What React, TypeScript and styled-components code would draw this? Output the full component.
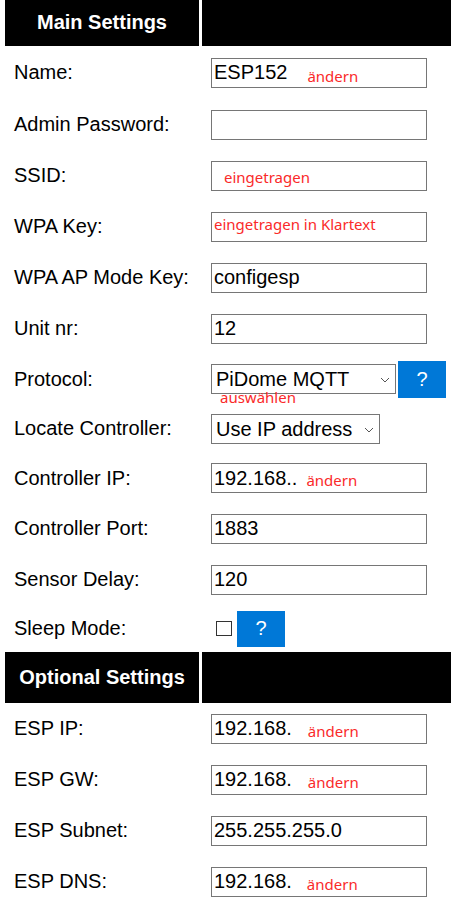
import React from "react";
import styled, { createGlobalStyle } from "styled-components";

const Global = createGlobalStyle`
  html, body { margin: 0; padding: 0; background: #fff; }
  body { font-family: "Liberation Sans", Arial, sans-serif; color: #000; }
`;

const Page = styled.div`
  width: 451px;
  height: 919px;
  overflow: hidden;
  display: flex;
  flex-direction: column;
`;

const Row = styled.div<{ $h: number }>`
  display: grid;
  grid-template-columns: 194px 1fr;
  column-gap: 3px;
  padding-left: 5px;
  height: ${(p) => p.$h}px;
  flex: none;
  box-sizing: border-box;
`;

const HeadCell = styled.div<{ $pb?: number }>`
  background: #000;
  color: #fff;
  font-weight: bold;
  font-size: 20px;
  display: flex;
  align-items: center;
  justify-content: center;
  padding-bottom: ${(p) => p.$pb ?? 0}px;
  white-space: nowrap;
`;

const Label = styled.div`
  display: flex;
  align-items: center;
  padding-left: 9px;
  font-size: 20px;
  white-space: nowrap;
`;

const Cell = styled.div`
  display: flex;
  align-items: center;
  padding-left: 9px;
`;

const Field = styled.div`
  box-sizing: border-box;
  width: 216px;
  height: 30px;
  border: 1px solid #767676;
  display: flex;
  align-items: center;
  padding: 0 2px;
  font-size: 20px;
  white-space: nowrap;
  background: #fff;
`;

const Note = styled.span<{ $gap?: number; $dy?: number }>`
  font-family: "Noto Sans", "Open Sans", sans-serif;
  font-size: 15px;
  color: #fa2a2a;
  margin-left: ${(p) => p.$gap ?? 0}px;
  transform: translateY(${(p) => p.$dy ?? 2}px);
  white-space: nowrap;
`;

const SelectWrap = styled.div<{ $w: number }>`
  position: relative;
  width: ${(p) => p.$w}px;
  height: 30px;
`;

const Select = styled.select`
  appearance: none;
  -webkit-appearance: none;
  width: 100%;
  height: 100%;
  box-sizing: border-box;
  border: 1px solid #767676;
  border-radius: 0;
  background: #fff;
  font-family: "Liberation Sans", Arial, sans-serif;
  font-size: 20px;
  color: #000;
  padding: 0 0 0 4px;
  margin: 0;
  outline: none;
`;

const Chevron = styled.svg`
  position: absolute;
  right: 6px;
  top: 13px;
  pointer-events: none;
`;

const UnderNote = styled.span`
  position: absolute;
  left: 9px;
  top: 23px;
  z-index: 1;
  font-family: "Noto Sans", "Open Sans", sans-serif;
  font-size: 15px;
  color: #fa2a2a;
  white-space: nowrap;
  line-height: normal;
`;

const Help = styled.button<{ $h: number; $ml: number }>`
  width: 48px;
  height: ${(p) => p.$h}px;
  margin: 0 0 0 ${(p) => p.$ml}px;
  padding: 0;
  background: #0078d7;
  color: #fff;
  border: none;
  border-radius: 0;
  font-family: "Liberation Sans", Arial, sans-serif;
  font-size: 20px;
  flex: none;
`;

const Check = styled.span`
  display: block;
  box-sizing: border-box;
  width: 16px;
  height: 15px;
  border: 1px solid #333;
  background: #fff;
  margin-left: 5px;
  flex: none;
`;

const Arrow = () => (
  <Chevron width="10" height="6" viewBox="0 0 10 6">
    <path d="M1 1 L5 5 L9 1" fill="none" stroke="#555" strokeWidth="1" />
  </Chevron>
);

const TextRow = ({
  h,
  label,
  children,
}: {
  h: number;
  label: string;
  children?: React.ReactNode;
}) => (
  <Row $h={h}>
    <Label>{label}</Label>
    <Cell>{children}</Cell>
  </Row>
);

export default function App() {
  return (
    <>
      <Global />
      <Page>
        <Row $h={46}>
          <HeadCell $pb={2}>Main Settings</HeadCell>
          <HeadCell />
        </Row>
        <TextRow h={53} label="Name:">
          <Field>
            ESP152<Note $gap={20} $dy={3}>ändern</Note>
          </Field>
        </TextRow>
        <TextRow h={51} label="Admin Password:">
          <Field />
        </TextRow>
        <TextRow h={51} label="SSID:">
          <Field>
            <Note $gap={10} $dy={1}>eingetragen</Note>
          </Field>
        </TextRow>
        <TextRow h={51} label="WPA Key:">
          <Field>
            <Note $gap={0} $dy={-3}>eingetragen in Klartext</Note>
          </Field>
        </TextRow>
        <TextRow h={51} label="WPA AP Mode Key:">
          <Field>configesp</Field>
        </TextRow>
        <TextRow h={51} label="Unit nr:">
          <Field>12</Field>
        </TextRow>
        <TextRow h={50} label="Protocol:">
          <SelectWrap $w={185}>
            <Select defaultValue="pidome">
              <option value="pidome">PiDome MQTT</option>
            </Select>
            <Arrow />
            <UnderNote>auswählen</UnderNote>
          </SelectWrap>
          <Help $h={37} $ml={2}>?</Help>
        </TextRow>
        <TextRow h={49} label="Locate Controller:">
          <SelectWrap $w={169}>
            <Select defaultValue="ip">
              <option value="ip">Use IP address</option>
            </Select>
            <Arrow />
          </SelectWrap>
        </TextRow>
        <TextRow h={50} label="Controller IP:">
          <Field>
            192.168..<Note $gap={9} $dy={2}>ändern</Note>
          </Field>
        </TextRow>
        <TextRow h={51} label="Controller Port:">
          <Field>1883</Field>
        </TextRow>
        <TextRow h={51} label="Sensor Delay:">
          <Field>120</Field>
        </TextRow>
        <TextRow h={47} label="Sleep Mode:">
          <Check />
          <Help $h={36} $ml={5}>?</Help>
        </TextRow>
        <Row $h={51}>
          <HeadCell>Optional Settings</HeadCell>
          <HeadCell />
        </Row>
        <TextRow h={51} label="ESP IP:">
          <Field>
            192.168.<Note $gap={16} $dy={2}>ändern</Note>
          </Field>
        </TextRow>
        <TextRow h={51} label="ESP GW:">
          <Field>
            192.168.<Note $gap={16} $dy={2}>ändern</Note>
          </Field>
        </TextRow>
        <TextRow h={51} label="ESP Subnet:">
          <Field>255.255.255.0</Field>
        </TextRow>
        <TextRow h={51} label="ESP DNS:">
          <Field>
            192.168.<Note $gap={15} $dy={2}>ändern</Note>
          </Field>
        </TextRow>
      </Page>
    </>
  );
}
